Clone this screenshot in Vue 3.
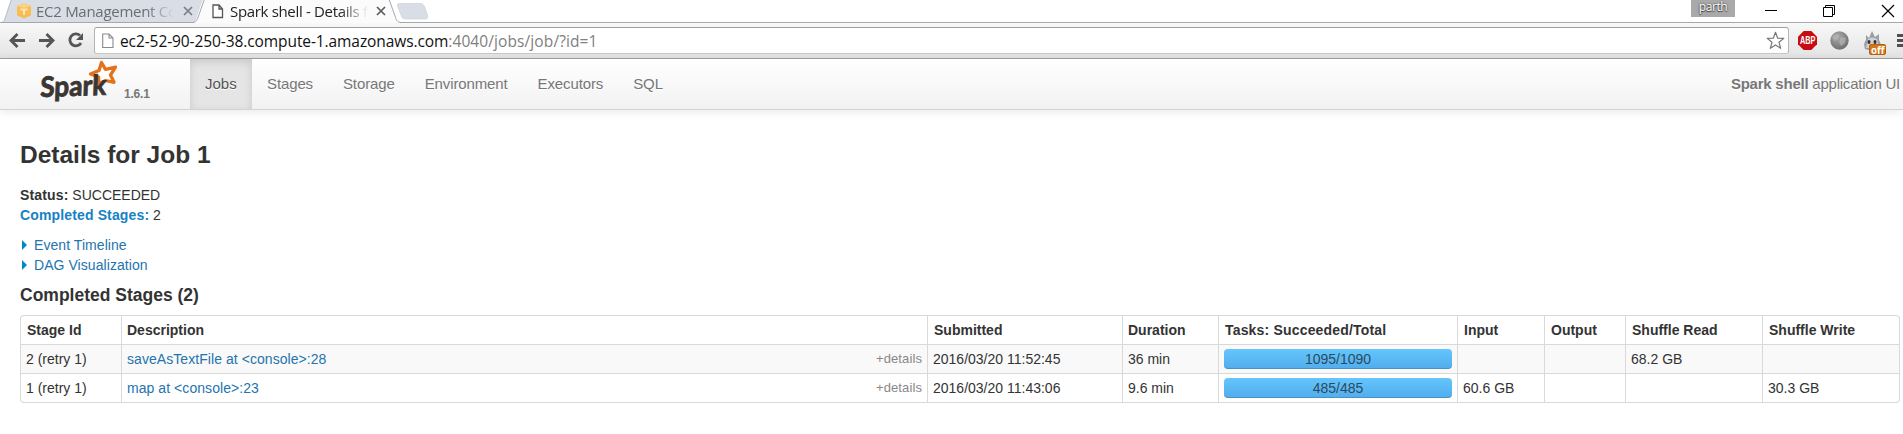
<script setup>
const navItems = ['Jobs', 'Stages', 'Storage', 'Environment', 'Executors', 'SQL']
const columns = ['Stage Id', 'Description', 'Submitted', 'Duration', 'Tasks: Succeeded/Total', 'Input', 'Output', 'Shuffle Read', 'Shuffle Write']
const stages = [
  { id: '2 (retry 1)', name: 'saveAsTextFile at <console>:28', submitted: '2016/03/20 11:52:45', duration: '36 min', tasks: '1095/1090', input: '', output: '', read: '68.2 GB', write: '' },
  { id: '1 (retry 1)', name: 'map at <console>:23', submitted: '2016/03/20 11:43:06', duration: '9.6 min', tasks: '485/485', input: '60.6 GB', output: '', read: '', write: '30.3 GB' },
]
</script>

<template>
  <div class="window">
    <header class="titlebar">
      <svg class="tab-shapes" width="440" height="23" viewBox="0 0 440 23">
        <path d="M0 22.5H2C4 22 4.500 20 5.500 17L10 3L11.500 -1H203L195 22.500Z" fill="#d8dde6" />
        <path d="M0 22.500H1.500C4 22 4.500 20 5.500 17L11.500 -1" fill="none" stroke="#b9bcc2" />
        <path d="M193 23C197 22 197.500 19 198.500 16L204.500 -1H389L395 16C396.500 20 397 22 401 23Z" fill="#fbfbfb" />
        <path d="M0 22.500H193C196.500 22 197.500 19 198.500 16L204.500 -1M389 -1L395 16C396.500 20 397 22.500 401 22.500H440" fill="none" stroke="#a5a7aa" />
        <path d="M399 3.500H420C423 3.500 424 5 425 8L427.500 15C428 18 427.500 19 425 19H406C403 19 402 18 401 15L397.500 6C397 4.500 397.500 3.500 399 3.500Z" fill="#d8dde6" stroke="#cdd1d8" stroke-width=".7" />
      </svg>
      <div class="tab tab-back">
        <svg width="16" height="16" viewBox="0 0 16 16">
          <path d="M8 .5L15 3V12.500L8 15.500L1 12.500V3Z" fill="#f7bd52" />
          <path d="M1 3L8 5L15 3L8 .5Z" fill="#fbd27f" />
          <path d="M4.500 5.500H11.500V7.500H9V12H7V7.500H4.500Z" fill="#fde6b4" />
        </svg>
        <span class="tab-title">EC2 Management Co</span>
        <svg class="tab-close" width="10" height="10" viewBox="0 0 10 10"><path d="M1 1L9 9M9 1L1 9" stroke="#7b7e83" stroke-width="1.700" /></svg>
      </div>
      <div class="tab tab-front">
        <svg width="12" height="15" viewBox="0 0 12 15"><path d="M1 1H7L10.500 5V13.500H1ZM7 1V5H10.500" fill="#fff" stroke="#555" stroke-width="1.300" /></svg>
        <span class="tab-title">Spark shell - Details f</span>
        <svg class="tab-close" width="10" height="10" viewBox="0 0 10 10"><path d="M1 1L9 9M9 1L1 9" stroke="#5a5a5a" stroke-width="1.700" /></svg>
      </div>
      <div class="profile">parth</div>
      <svg class="winctl" width="130" height="20" viewBox="0 0 130 20" fill="none" stroke="#000" stroke-width="1">
        <path d="M0 10.500H12" />
        <path d="M58.500 7.500H67.500V16.500H58.500ZM60.500 7V5.500H69.500V14.500H68" />
        <path d="M117 5L129 17M129 5L117 17" stroke-width="1.200" />
      </svg>
    </header>

    <div class="toolbar">
      <svg class="nav-icons" width="94" height="34" viewBox="0 0 94 34" fill="none" stroke="#555" stroke-width="2.800">
        <path d="M25 17.500H12M17.500 11L11 17.500L17.500 24" />
        <path d="M39 17.500H52M46.500 11L53 17.500L46.500 24" />
        <path d="M80 12.500A6 6 0 1 0 81 20" />
        <path d="M83 10V17H76Z" fill="#555" stroke="none" />
      </svg>
      <div class="omnibox">
        <svg class="page-icon" width="12" height="16" viewBox="0 0 12 16"><path d="M.7 1H7L11 5V14.500H.7ZM7 1V5H11" fill="#fff" stroke="#8a8a8a" stroke-width="1.100" /></svg>
        <span class="url"><span class="host">ec2-52-90-250-38.compute-1.amazonaws.com</span><span class="path">:4040/jobs/job/?id=1</span></span>
        <svg class="star" width="19" height="19" viewBox="0 0 19 19"><path d="M9.500 1.300L11.700 7.200L17.800 7.400L13 11.300L14.700 17.300L9.500 13.900L4.300 17.300L6 11.300L1.200 7.400L7.300 7.200Z" fill="#fff" stroke="#777" stroke-width="1.200" stroke-linejoin="round" /></svg>
      </div>
      <svg class="extensions" width="114" height="34" viewBox="1789 23 114 34">
        <path d="M1803.700 31H1811.300L1817 36.700V44.300L1811.300 50H1803.700L1798 44.300V36.700Z" fill="#c70d12" />
        <text x="1800" y="44" textLength="15.500" lengthAdjust="spacingAndGlyphs" class="abp">ABP</text>
        <defs>
          <radialGradient id="globe" cx=".4" cy=".3" r=".8"><stop offset="0" stop-color="#aaa" /><stop offset="1" stop-color="#686868" /></radialGradient>
        </defs>
        <circle cx="1839.500" cy="40.500" r="9.200" fill="url(#globe)" />
        <path d="M1832 37Q1835 33 1839 35L1838 39L1834 41ZM1841 37L1846 38L1845 43L1841 46L1839 42Z" fill="#bbb" opacity=".6" />
        <path d="M1865 49Q1863 43 1866 40L1866 35L1869 38L1872 31L1875 37L1879 34L1879 40Q1882 45 1879 50L1872 51Z" fill="#9b9da1" />
        <path d="M1868 39Q1872 36 1877 39L1879 48H1866Z" fill="#cfd1d4" />
        <ellipse cx="1869" cy="42" rx="1.500" ry="2" fill="#333" /><ellipse cx="1875" cy="42" rx="1.500" ry="2" fill="#333" />
        <path d="M1869 46L1872 48" stroke="#e38a92" stroke-width="1.500" />
        <rect x="1869.500" y="44.500" width="16" height="10" rx="1.500" fill="#d47717" stroke="#b9610c" />
        <text x="1871" y="53.500" textLength="13.500" lengthAdjust="spacingAndGlyphs" class="off">off</text>
        <path d="M1897 35.500H1905M1897 40.500H1905M1897 45.500H1905" stroke="#505050" stroke-width="3" />
      </svg>
    </div>

    <nav class="navbar">
      <div class="brand">
        <svg width="80" height="44" viewBox="38 59 80 44">
          <path d="M101.500 62.500L105.500 69.300L115.500 67.200L110.500 75L114 82.300L105.500 80.500L99 84L98.500 77L90.500 74L99 70.500Z" fill="#fff" stroke="#e2731c" stroke-width="3.300" stroke-linejoin="round" />
          <g transform="translate(40 97) rotate(-2) skewX(-4)">
            <text x="0" y="0" textLength="66" lengthAdjust="spacingAndGlyphs" class="logo-text">Spark</text>
          </g>
        </svg>
        <span class="version">1.6.1</span>
      </div>
      <a v-for="(item, i) in navItems" :key="item" class="nav-link" :class="{ active: i === 0 }">{{ item }}</a>
      <p class="app-name"><strong>Spark shell</strong> application UI</p>
    </nav>

    <main>
      <h3>Details for Job 1</h3>
      <ul class="summary">
        <li><strong>Status:</strong> SUCCEEDED</li>
        <li><strong class="link">Completed Stages:</strong> 2</li>
      </ul>
      <div class="toggles">
        <a><i class="caret"></i><span>Event Timeline</span></a>
        <a><i class="caret"></i><span>DAG Visualization</span></a>
      </div>
      <h4>Completed Stages (2)</h4>
      <table>
        <colgroup><col v-for="(c, i) in columns" :key="c" :class="'c' + i" /></colgroup>
        <thead>
          <tr><th v-for="c in columns" :key="c">{{ c }}</th></tr>
        </thead>
        <tbody>
          <tr v-for="s in stages" :key="s.id">
            <td>{{ s.id }}</td>
            <td><div class="desc"><a>{{ s.name }}</a><span class="details">+details</span></div></td>
            <td>{{ s.submitted }}</td>
            <td>{{ s.duration }}</td>
            <td><div class="progress">{{ s.tasks }}</div></td>
            <td>{{ s.input }}</td>
            <td>{{ s.output }}</td>
            <td>{{ s.read }}</td>
            <td>{{ s.write }}</td>
          </tr>
        </tbody>
      </table>
    </main>
  </div>
</template>

<style>
body { margin: 0; background: #fff; }
</style>

<style scoped>
.window { width: 1903px; height: 434px; overflow: hidden; font: 14px/20px "Liberation Sans", Arial, sans-serif; color: #333; background: #fff; }
.titlebar { position: relative; height: 23px; display: flex; box-sizing: border-box; border-bottom: 1px solid #a8a8a8; font: 15px/20px "Open Sans", sans-serif; }
.tab-shapes { position: absolute; left: 0; top: 0; }
.tab { position: relative; display: flex; align-items: center; height: 22px; box-sizing: border-box; }
.tab-back { width: 203px; padding-left: 16px; color: #6a6d72; }
.tab-front { width: 192px; padding-left: 9px; color: #222; }
.tab-title { white-space: nowrap; overflow: hidden; width: 138px; margin-left: 4px; letter-spacing: -.28px; -webkit-mask-image: linear-gradient(90deg, #000 80%, transparent); mask-image: linear-gradient(90deg, #000 80%, transparent); }
.tab-front .tab-title { margin-left: 6px; letter-spacing: -.33px; }
.tab-close { margin-left: 9px; }
.tab-front .tab-close { margin-left: 8px; }
.profile { margin-left: 1296px; width: 44px; height: 17px; background: #a9a9a9; color: #fff; font-size: 12px; line-height: 14px; letter-spacing: -.4px; text-align: center; text-shadow: 0 0 2px #333, 0 1px 1px #444; flex: none; }
.winctl { margin-left: 30px; flex: none; }
.toolbar { height: 36px; box-sizing: border-box; border-bottom: 1px solid #a3a3a3; background: linear-gradient(#f8f8f8, #e4e4e4); display: flex; }
.nav-icons, .extensions { flex: none; }
.omnibox { width: 1695px; height: 27px; margin-top: 4px; box-sizing: border-box; border: 1px solid #b4b4b4; border-top-color: #9f9f9f; border-bottom-color: #c8c8c8; border-radius: 3px; background: #fff; display: flex; align-items: center; }
.page-icon { margin-left: 7px; }
.url { margin-left: 6px; font: 15.5px/24px "Open Sans", sans-serif; white-space: nowrap; }
.host { color: #111; letter-spacing: -.09px; }
.path { color: #808080; letter-spacing: .1px; }
.star { margin-left: auto; margin-right: 3px; }
.abp { font: bold 10px "Liberation Sans", sans-serif; fill: #fff; }
.off { font: bold 11px "Open Sans", sans-serif; fill: #fff; }
.navbar { position: relative; height: 51px; box-sizing: border-box; display: flex; background: linear-gradient(#fff, #f2f2f2); border-bottom: 1px solid #d4d4d4; box-shadow: 0 1px 10px rgba(0, 0, 0, .1); font-size: 15px; line-height: 20px; color: #777; }
.brand { width: 190px; box-sizing: border-box; padding-left: 38px; display: flex; }
.logo-text { font: bold 28px Lato, sans-serif; fill: #3a3633; stroke: #3a3633; stroke-width: .9; }
.version { margin: 25px 0 0 6px; font-size: 12px; font-weight: bold; letter-spacing: -.2px; }
.nav-link { padding: 15px 15px 0; height: 50px; box-sizing: border-box; letter-spacing: -.12px; text-shadow: 0 1px 0 #fff; }
.nav-link.active { color: #555; width: 62px; letter-spacing: 0; background: #e5e5e5; box-shadow: inset 0 3px 8px rgba(0, 0, 0, .125); }
.app-name { margin: 15px 3px 0 auto; white-space: nowrap; letter-spacing: -.23px; text-shadow: 0 1px 0 #fff; }
main { padding: 25px 3px 0 20px; }
h3 { margin: 0 0 10px; font-size: 24.5px; line-height: 40px; }
h4 { margin: 10px 0; font-size: 17.5px; line-height: 20px; }
.summary { list-style: none; margin: 0 0 10px; padding: 0; }
.summary strong { letter-spacing: .14px; }
.link, a { color: #08c; }
.navbar a { color: #777; }
.navbar a.active { color: #555; }
main a { color: #2474ae; letter-spacing: .06px; }
.link { color: #1482c4; }
.toggles a { display: flex; align-items: center; height: 20px; }
.caret { border: solid transparent; border-width: 5px 0 5px 5px; border-left-color: #08c; margin: 0 7px 0 2px; }
table { width: 1880px; table-layout: fixed; border-collapse: separate; border-spacing: 0; border: 1px solid #d9d9d9; border-left: 0; border-top: 0; border-radius: 4px; }
th, td { box-sizing: border-box; height: 29px; padding: 4px 5px; border-left: 1px solid #d9d9d9; border-top: 1px solid #d9d9d9; text-align: left; line-height: 20px; white-space: nowrap; }
th { padding-left: 6px; }
th:nth-child(2), th:nth-child(4) { padding-left: 5px; }
th:nth-child(5) { letter-spacing: .18px; }
th:first-child { border-top-left-radius: 4px; }
th:last-child { border-top-right-radius: 4px; }
tbody tr:last-child td:first-child { border-bottom-left-radius: 4px; }
tbody tr:nth-child(odd) td { background: #f9f9f9; }
.c0 { width: 101px; } .c1 { width: 806px; } .c2 { width: 195px; } .c3 { width: 96px; } .c4 { width: 239px; } .c5 { width: 87px; } .c6 { width: 81px; } .c7 { width: 137px; } .c8 { width: 137px; }
.desc { display: flex; justify-content: space-between; }
.details { font-size: 13px; line-height: 19px; letter-spacing: .1px; color: #888; }
.progress { height: 20px; border-radius: 4px; text-align: center; color: #2b4a60; background: linear-gradient(#64c6fc, #51acec); box-shadow: inset 0 -1px 0 rgba(0, 0, 0, .15); }
</style>
